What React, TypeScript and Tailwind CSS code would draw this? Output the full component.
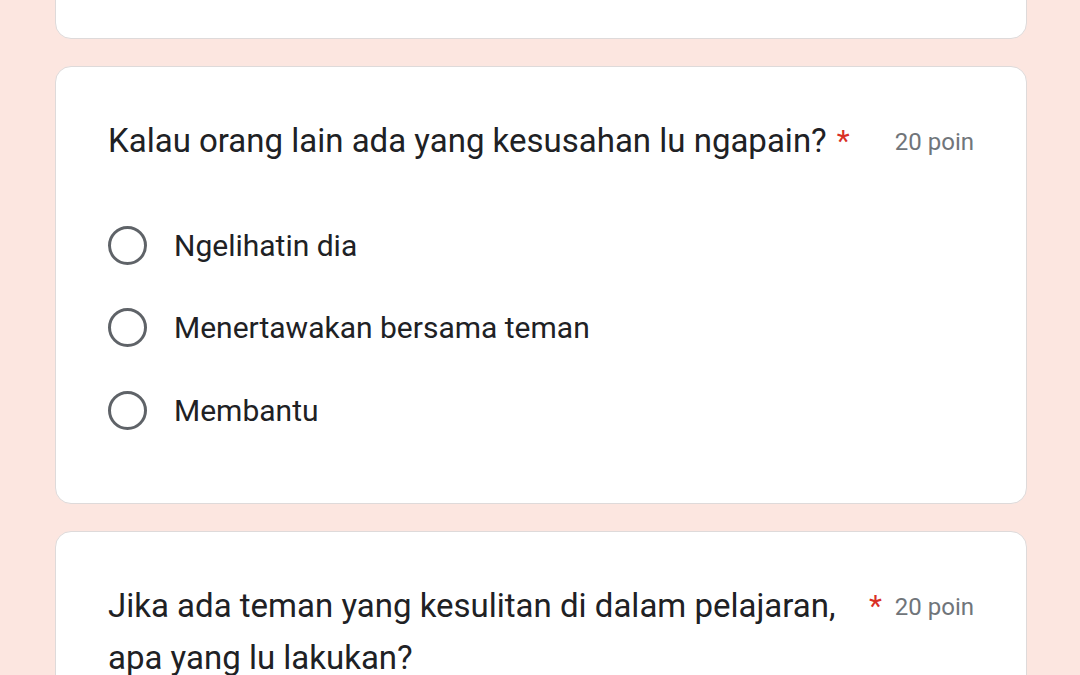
import React from 'react'

const font = { fontFamily: 'Roboto, "Noto Sans", sans-serif' }

function Radio({ label }: { label: string }) {
  return (
    <div className="flex h-[82.5px] items-center">
      <span className="box-border h-[39px] w-[39px] shrink-0 rounded-full border-[3.5px] border-[#5f6368]" />
      <span className="ml-[27px] text-[30px] text-[#202124]">{label}</span>
    </div>
  )
}

function Header({ title }: { title: string }) {
  return (
    <div className="flex items-start">
      <div className="max-w-[751px] text-[33px] leading-[52px] text-[#202124]">{title}</div>
      <span className="ml-[10px] shrink-0 text-[30px] leading-[52px] text-[#d93025]">*</span>
      <span className="ml-auto shrink-0 whitespace-nowrap pl-[10px] text-[24px] leading-[54px] text-[#70757a]">20 poin</span>
    </div>
  )
}

export default function App() {
  return (
    <div className="h-[675px] overflow-hidden bg-[#fce6e0] pl-[55px] pr-[53px]" style={font}>
      <div className="-mt-[61px] h-[100px] rounded-[16px] border border-[#dedada] bg-white" />

      <div className="mt-[27px] rounded-[16px] border border-[#dedada] bg-white px-[52px] pb-[51px] pt-[48px]">
        <Header title="Kalau orang lain ada yang kesusahan lu ngapain?" />
        <div className="mt-[35px]">
          <Radio label="Ngelihatin dia" />
          <Radio label="Menertawakan bersama teman" />
          <Radio label="Membantu" />
        </div>
      </div>

      <div className="mt-[27px] rounded-[16px] border border-[#dedada] bg-white px-[52px] pb-[52px] pt-[48px]">
        <Header title="Jika ada teman yang kesulitan di dalam pelajaran, apa yang lu lakukan?" />
      </div>
    </div>
  )
}
